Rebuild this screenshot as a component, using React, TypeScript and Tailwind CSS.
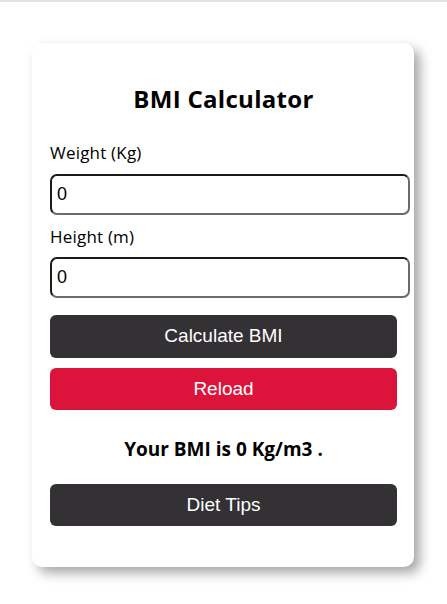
import React from "react";

const inputCls =
  "w-[360px] h-[41px] rounded-[7px] border-2 border-t-[#1a1a1a] border-l-[#1a1a1a] border-b-[#6b6b6b] border-r-[#6b6b6b] px-[5px] text-[18px] text-black outline-none font-['Liberation_Sans',Arial,sans-serif]";
const btnCls =
  "w-[347px] rounded-[6px] text-white text-[19px] font-['Liberation_Sans',Arial,sans-serif]";

export default function App() {
  return (
    <div className="w-[447px] h-[604px] bg-white border-t-2 border-[#e3e3e3] overflow-hidden flex items-start pl-[32px] pt-[41px]">
      <div className="w-[382px] h-[524px] bg-white rounded-[10px] shadow-[6px_6px_12px_rgba(0,0,0,0.35)] px-[18px] pt-[41px] flex flex-col font-['Open_Sans','Noto_Sans',sans-serif]">
        <h1 className="h-[30px] leading-[30px] text-center text-[24px] tracking-[0.3px] font-bold text-black w-[347px]">
          BMI Calculator
        </h1>
        <label className="mt-[27px] h-[24px] leading-[24px] text-[17px] tracking-[0.2px] text-black">Weight (Kg)</label>
        <input readOnly value="0" className={`mt-[9px] ${inputCls}`} />
        <label className="mt-[10px] h-[24px] leading-[24px] text-[17px] tracking-[0.2px] text-black">Height (m)</label>
        <input readOnly value="0" className={`mt-[8px] ${inputCls}`} />
        <button className={`mt-[17px] h-[43px] bg-[#333133] ${btnCls}`}>Calculate BMI</button>
        <button className={`mt-[10px] h-[42px] bg-[#dc143c] ${btnCls}`}>Reload</button>
        <p className="mt-[27px] w-[347px] h-[24px] leading-[24px] text-center text-[19px] font-bold text-black">
          Your BMI is 0 Kg/m3 .
        </p>
        <button className={`mt-[23px] h-[42px] bg-[#333133] ${btnCls}`}>Diet Tips</button>
      </div>
    </div>
  );
}
